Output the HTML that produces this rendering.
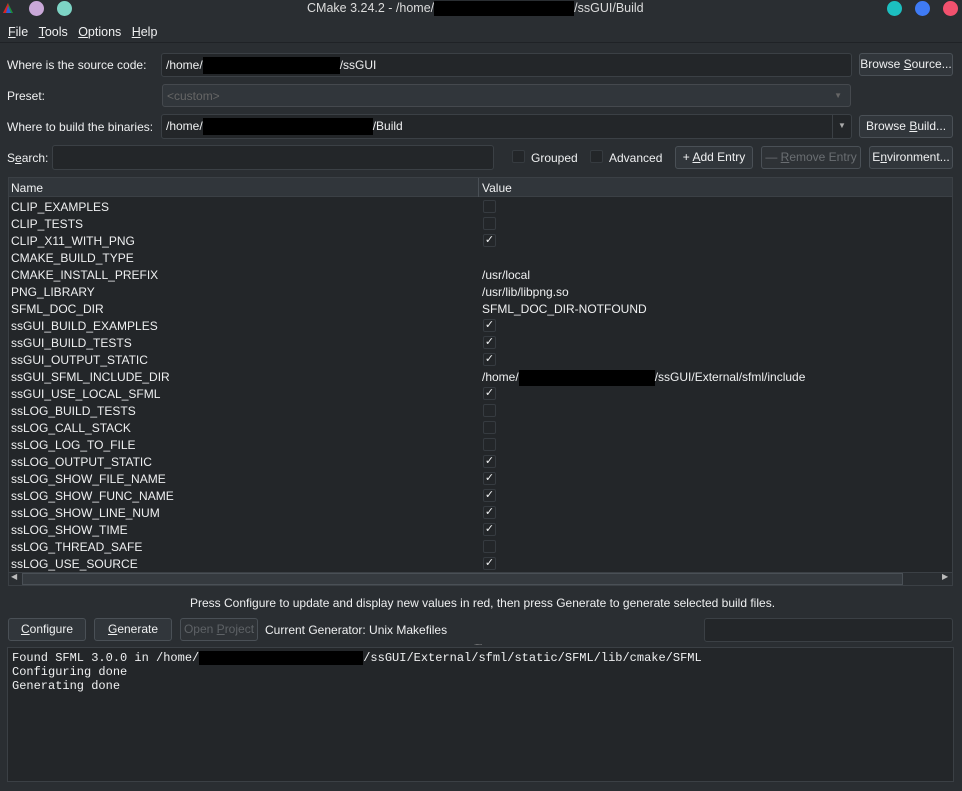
<!DOCTYPE html><html><head><meta charset="utf-8"><style>
*{box-sizing:border-box;margin:0;padding:0}
body{width:962px;height:791px;background:#2a2e32;color:#eff0f1;font:12px "Liberation Sans",sans-serif;position:relative;overflow:hidden}
.a{position:absolute}
.in{position:absolute;background:#232629;border:1px solid #3b4045;border-radius:3px;padding-left:4px;line-height:22px}
.btn{position:absolute;background:#31363b;border:1px solid #4a5056;border-radius:3px;text-align:center;line-height:21px}
.red{display:inline-block;background:#000;height:17px;vertical-align:middle}
.cb{position:absolute;width:13px;height:13px;border:1px solid #363b40;background:#232629;border-radius:2px}
.row{position:absolute;left:11px;height:17px;line-height:17px}
u{text-decoration:underline}
</style></head><body>
<div class="a" style="left:0;top:0;width:962px;height:16px;background:#2a2e32"></div>
<svg class="a" style="left:3px;top:3px" width="10" height="10"><polygon points="5,0 10,10 0,10" fill="#1d8f3a"/><polygon points="5,0 7,10 0,10" fill="#d22"/><polygon points="5,3 8,10 3,10" fill="#2b5fd8"/></svg>
<div class="a" style="left:29px;top:1px;width:15px;height:15px;border-radius:50%;background:#c9a8d8"></div>
<div class="a" style="left:57px;top:1px;width:15px;height:15px;border-radius:50%;background:#7dd4c5"></div>
<div class="a" style="left:307px;top:0;line-height:16px;font-size:12.5px;color:#dcdcdc">CMake 3.24.2 - /home/<span class="red" style="width:140px;height:15px"></span>/ssGUI/Build</div>
<div class="a" style="left:887px;top:1px;width:15px;height:15px;border-radius:50%;background:#1cbfc0"></div>
<div class="a" style="left:915px;top:1px;width:15px;height:15px;border-radius:50%;background:#3f7bf5"></div>
<div class="a" style="left:943px;top:1px;width:15px;height:15px;border-radius:50%;background:#f2516e"></div>
<div class="a" style="left:0;top:42px;width:962px;height:1px;background:#1f2226"></div>
<div class="a" style="left:8px;top:24px;line-height:16px;font-size:12.5px"><u>F</u>ile&nbsp;&nbsp;&nbsp;<u>T</u>ools&nbsp;&nbsp;&nbsp;<u>O</u>ptions&nbsp;&nbsp;&nbsp;<u>H</u>elp</div>

<div class="a" style="left:7px;top:58px">Where is the source code:</div>
<div class="in" style="left:161px;top:53px;width:691px;height:24px">/home/<span class="red" style="width:137px"></span>/ssGUI</div>
<div class="btn" style="left:859px;top:53px;width:94px;height:23px">Browse <u>S</u>ource...</div>
<div class="a" style="left:7px;top:89px">Preset:</div>
<div class="in" style="left:162px;top:84px;width:689px;height:23px;background:#31363b;color:#666;border-color:#45494e">&lt;custom&gt;<span style="position:absolute;right:8px;color:#666;font-size:8px">▼</span></div>
<div class="a" style="left:7px;top:120px">Where to build the binaries:</div>
<div class="in" style="left:161px;top:114px;width:691px;height:25px">/home/<span class="red" style="width:170px"></span>/Build<span style="position:absolute;right:0;top:0;width:19px;height:23px;border-left:1px solid #3b4045;text-align:center;font-size:8px;color:#aaa">▼</span></div>
<div class="btn" style="left:859px;top:115px;width:94px;height:23px">Browse <u>B</u>uild...</div>
<div class="a" style="left:7px;top:151px">S<u>e</u>arch:</div>
<div class="in" style="left:52px;top:145px;width:442px;height:25px"></div>
<div class="cb" style="left:512px;top:150px"></div><div class="a" style="left:531px;top:151px">Grouped</div>
<div class="cb" style="left:590px;top:150px"></div><div class="a" style="left:609px;top:151px">Advanced</div>
<div class="btn" style="left:675px;top:146px;width:78px;height:23px">+ <u>A</u>dd Entry</div>
<div class="btn" style="left:761px;top:146px;width:100px;height:23px;color:#6a6e72;background:#2e3236">— <u>R</u>emove Entry</div>
<div class="btn" style="left:869px;top:146px;width:84px;height:23px">E<u>n</u>vironment...</div>

<div class="a" style="left:8px;top:177px;width:945px;height:409px;background:#232629;border:1px solid #3b4045"></div>
<div class="a" style="left:9px;top:178px;width:943px;height:19px;background:#31363b;border-bottom:1px solid #3b4045"></div>
<div class="a" style="left:478px;top:178px;width:1px;height:19px;background:#4a5056"></div>
<div class="a" style="left:11px;top:181px">Name</div><div class="a" style="left:482px;top:181px">Value</div>
<div id="rows"></div>
<div class="a" style="left:9px;top:572px;width:943px;height:13px;background:#2a2e32;border-top:1px solid #3b4045"></div>
<div class="a" style="left:22px;top:573px;width:881px;height:12px;background:#353a3f;border:1px solid #4a5056"></div>
<div class="a" style="left:11px;top:572px;font-size:8px;color:#bbb">◀</div>
<div class="a" style="left:942px;top:572px;font-size:8px;color:#bbb">▶</div>

<div class="a" style="left:190px;top:596px">Press Configure to update and display new values in red, then press Generate to generate selected build files.</div>
<div class="btn" style="left:8px;top:618px;width:78px;height:23px"><u>C</u>onfigure</div>
<div class="btn" style="left:94px;top:618px;width:78px;height:23px"><u>G</u>enerate</div>
<div class="btn" style="left:180px;top:618px;width:78px;height:23px;color:#5e6266;background:#2e3236">Open <u>P</u>roject</div>
<div class="a" style="left:265px;top:623px">Current Generator: Unix Makefiles</div>
<div class="in" style="left:704px;top:618px;width:249px;height:24px"></div>
<div class="a" style="left:474px;top:638px;color:#888;font-size:8px;letter-spacing:-1px">......</div>
<div class="a" style="left:7px;top:647px;width:947px;height:135px;background:#232629;border:1px solid #3b4045;padding:3px 4px;font:12px/14px 'Liberation Mono',monospace">Found SFML 3.0.0 in /home/<span class="red" style="width:164px;height:14px"></span>/ssGUI/External/sfml/static/SFML/lib/cmake/SFML<br>Configuring done<br>Generating done</div>
<script>
var r=[["CLIP_EXAMPLES",0],["CLIP_TESTS",0],["CLIP_X11_WITH_PNG",1],["CMAKE_BUILD_TYPE",""],["CMAKE_INSTALL_PREFIX","/usr/local"],["PNG_LIBRARY","/usr/lib/libpng.so"],["SFML_DOC_DIR","SFML_DOC_DIR-NOTFOUND"],["ssGUI_BUILD_EXAMPLES",1],["ssGUI_BUILD_TESTS",1],["ssGUI_OUTPUT_STATIC",1],["ssGUI_SFML_INCLUDE_DIR","P"],["ssGUI_USE_LOCAL_SFML",1],["ssLOG_BUILD_TESTS",0],["ssLOG_CALL_STACK",0],["ssLOG_LOG_TO_FILE",0],["ssLOG_OUTPUT_STATIC",1],["ssLOG_SHOW_FILE_NAME",1],["ssLOG_SHOW_FUNC_NAME",1],["ssLOG_SHOW_LINE_NUM",1],["ssLOG_SHOW_TIME",1],["ssLOG_THREAD_SAFE",0],["ssLOG_USE_SOURCE",1]];
var h="";r.forEach(function(e,i){var y=199+i*17;h+='<div class="row" style="top:'+y+'px">'+e[0]+'</div>';var v=e[1];
if(v===0||v===1){h+='<div class="cb" style="left:483px;top:'+(y+1)+'px;line-height:11px;text-align:center;font-size:11px">'+(v?'✓':'')+'</div>';}
else if(v==="P"){h+='<div class="row" style="left:482px;top:'+y+'px">/home/<span class="red" style="width:136px;height:16px"></span>/ssGUI/External/sfml/include</div>';}
else h+='<div class="row" style="left:482px;top:'+y+'px">'+v+'</div>';});
document.getElementById("rows").innerHTML=h;
</script>
</body></html>
